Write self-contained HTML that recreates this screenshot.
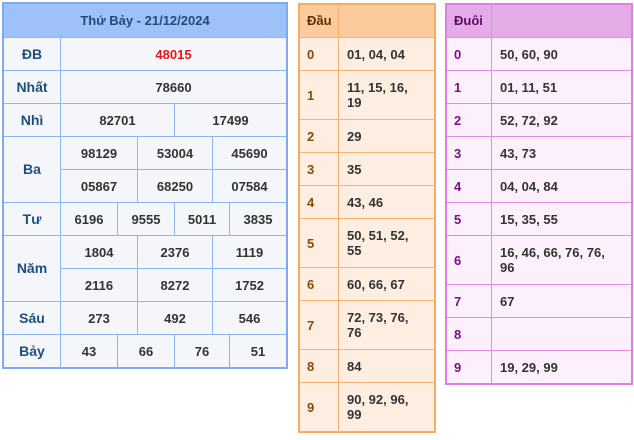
<!DOCTYPE html>
<html><head><meta charset="utf-8"><style>
body{margin:0;width:634px;height:440px;background:#fff;position:relative;font-family:"Liberation Sans",sans-serif;font-weight:bold;font-size:13px;overflow:hidden}
.c{position:absolute;box-sizing:border-box;display:flex;align-items:center;justify-content:center;color:#333;line-height:15px}
.b{border:1px solid #8db5f2;background:#f4f6fa}
.b.l{color:#1d4e7e;font-size:14px}
.o{border:1px solid #f7b271;background:#feede1;justify-content:flex-start;padding-left:8px}
.o.l{color:#8a4b06}
.p{border:1px solid #e38ae3;background:#fcf0fc;justify-content:flex-start;padding-left:8px}
.p.l{color:#7b0f86}
.f{position:absolute;box-sizing:border-box;pointer-events:none}
</style></head><body>
<!-- Table 1 -->
<div class="c b" style="left:3px;top:3px;width:284px;height:35px;background:#9dc1f8;color:#1d4e7e;border-color:#9dc1f8">Thứ Bảy - 21/12/2024</div>
<div class="c b l" style="left:3px;top:37px;width:58px;height:34px">ĐB</div>
<div class="c b" style="left:60px;top:37px;width:227px;height:34px;color:#e8141c">48015</div>
<div class="c b l" style="left:3px;top:70px;width:58px;height:34px">Nhất</div>
<div class="c b" style="left:60px;top:70px;width:227px;height:34px">78660</div>
<div class="c b l" style="left:3px;top:103px;width:58px;height:34px">Nhì</div>
<div class="c b" style="left:60px;top:103px;width:115px;height:34px">82701</div>
<div class="c b" style="left:174px;top:103px;width:113px;height:34px">17499</div>
<div class="c b l" style="left:3px;top:136px;width:58px;height:67px">Ba</div>
<div class="c b" style="left:60px;top:136px;width:78px;height:34px">98129</div>
<div class="c b" style="left:137px;top:136px;width:76px;height:34px">53004</div>
<div class="c b" style="left:212px;top:136px;width:75px;height:34px">45690</div>
<div class="c b" style="left:60px;top:169px;width:78px;height:34px">05867</div>
<div class="c b" style="left:137px;top:169px;width:76px;height:34px">68250</div>
<div class="c b" style="left:212px;top:169px;width:75px;height:34px">07584</div>
<div class="c b l" style="left:3px;top:202px;width:58px;height:34px">Tư</div>
<div class="c b" style="left:60px;top:202px;width:58px;height:34px">6196</div>
<div class="c b" style="left:117px;top:202px;width:58px;height:34px">9555</div>
<div class="c b" style="left:174px;top:202px;width:56px;height:34px">5011</div>
<div class="c b" style="left:229px;top:202px;width:58px;height:34px">3835</div>
<div class="c b l" style="left:3px;top:235px;width:58px;height:67px">Năm</div>
<div class="c b" style="left:60px;top:235px;width:78px;height:34px">1804</div>
<div class="c b" style="left:137px;top:235px;width:76px;height:34px">2376</div>
<div class="c b" style="left:212px;top:235px;width:75px;height:34px">1119</div>
<div class="c b" style="left:60px;top:268px;width:78px;height:34px">2116</div>
<div class="c b" style="left:137px;top:268px;width:76px;height:34px">8272</div>
<div class="c b" style="left:212px;top:268px;width:75px;height:34px">1752</div>
<div class="c b l" style="left:3px;top:301px;width:58px;height:34px">Sáu</div>
<div class="c b" style="left:60px;top:301px;width:78px;height:34px">273</div>
<div class="c b" style="left:137px;top:301px;width:76px;height:34px">492</div>
<div class="c b" style="left:212px;top:301px;width:75px;height:34px">546</div>
<div class="c b l" style="left:3px;top:334px;width:58px;height:34px">Bảy</div>
<div class="c b" style="left:60px;top:334px;width:58px;height:34px">43</div>
<div class="c b" style="left:117px;top:334px;width:58px;height:34px">66</div>
<div class="c b" style="left:174px;top:334px;width:56px;height:34px">76</div>
<div class="c b" style="left:229px;top:334px;width:58px;height:34px">51</div>
<div class="f" style="left:2px;top:2px;width:286px;height:367px;border:2px solid #7eaaf0"></div>

<!-- Table 2 -->
<div class="c o l" style="left:298px;top:3px;width:41px;height:35px;background:#fbcb9d;color:#5a3000">Đầu</div>
<div class="c o" style="left:338px;top:3px;width:97px;height:35px;background:#fbcb9d"></div>
<div class="c o l" style="left:298px;top:37px;width:41px;height:34px">0</div>
<div class="c o" style="left:338px;top:37px;width:97px;height:34px">01, 04, 04</div>
<div class="c o l" style="left:298px;top:70px;width:41px;height:50px">1</div>
<div class="c o" style="left:338px;top:70px;width:97px;height:50px">11, 15, 16,<br>19</div>
<div class="c o l" style="left:298px;top:119px;width:41px;height:34px">2</div>
<div class="c o" style="left:338px;top:119px;width:97px;height:34px">29</div>
<div class="c o l" style="left:298px;top:152px;width:41px;height:34px">3</div>
<div class="c o" style="left:338px;top:152px;width:97px;height:34px">35</div>
<div class="c o l" style="left:298px;top:185px;width:41px;height:34px">4</div>
<div class="c o" style="left:338px;top:185px;width:97px;height:34px">43, 46</div>
<div class="c o l" style="left:298px;top:218px;width:41px;height:50px">5</div>
<div class="c o" style="left:338px;top:218px;width:97px;height:50px">50, 51, 52,<br>55</div>
<div class="c o l" style="left:298px;top:267px;width:41px;height:34px">6</div>
<div class="c o" style="left:338px;top:267px;width:97px;height:34px">60, 66, 67</div>
<div class="c o l" style="left:298px;top:300px;width:41px;height:50px">7</div>
<div class="c o" style="left:338px;top:300px;width:97px;height:50px">72, 73, 76,<br>76</div>
<div class="c o l" style="left:298px;top:349px;width:41px;height:34px">8</div>
<div class="c o" style="left:338px;top:349px;width:97px;height:34px">84</div>
<div class="c o l" style="left:298px;top:382px;width:41px;height:50px">9</div>
<div class="c o" style="left:338px;top:382px;width:97px;height:50px">90, 92, 96,<br>99</div>
<div class="f" style="left:298px;top:3px;width:138px;height:430px;border:2px solid #f7ac63"></div>

<!-- Table 3 -->
<div class="c p l" style="left:445px;top:3px;width:47px;height:35px;background:#e5abe6;color:#5a1060">Đuôi</div>
<div class="c p" style="left:491px;top:3px;width:141px;height:35px;background:#e5abe6"></div>
<div class="c p l" style="left:445px;top:37px;width:47px;height:34px">0</div>
<div class="c p" style="left:491px;top:37px;width:141px;height:34px">50, 60, 90</div>
<div class="c p l" style="left:445px;top:70px;width:47px;height:34px">1</div>
<div class="c p" style="left:491px;top:70px;width:141px;height:34px">01, 11, 51</div>
<div class="c p l" style="left:445px;top:103px;width:47px;height:34px">2</div>
<div class="c p" style="left:491px;top:103px;width:141px;height:34px">52, 72, 92</div>
<div class="c p l" style="left:445px;top:136px;width:47px;height:34px">3</div>
<div class="c p" style="left:491px;top:136px;width:141px;height:34px">43, 73</div>
<div class="c p l" style="left:445px;top:169px;width:47px;height:34px">4</div>
<div class="c p" style="left:491px;top:169px;width:141px;height:34px">04, 04, 84</div>
<div class="c p l" style="left:445px;top:202px;width:47px;height:34px">5</div>
<div class="c p" style="left:491px;top:202px;width:141px;height:34px">15, 35, 55</div>
<div class="c p l" style="left:445px;top:235px;width:47px;height:50px">6</div>
<div class="c p" style="left:491px;top:235px;width:141px;height:50px">16, 46, 66, 76, 76,<br>96</div>
<div class="c p l" style="left:445px;top:284px;width:47px;height:34px">7</div>
<div class="c p" style="left:491px;top:284px;width:141px;height:34px">67</div>
<div class="c p l" style="left:445px;top:317px;width:47px;height:34px">8</div>
<div class="c p" style="left:491px;top:317px;width:141px;height:34px"></div>
<div class="c p l" style="left:445px;top:350px;width:47px;height:34px">9</div>
<div class="c p" style="left:491px;top:350px;width:141px;height:34px">19, 29, 99</div>
<div class="f" style="left:445px;top:3px;width:188px;height:382px;border:2px solid #e07fe0"></div>
</body></html>
